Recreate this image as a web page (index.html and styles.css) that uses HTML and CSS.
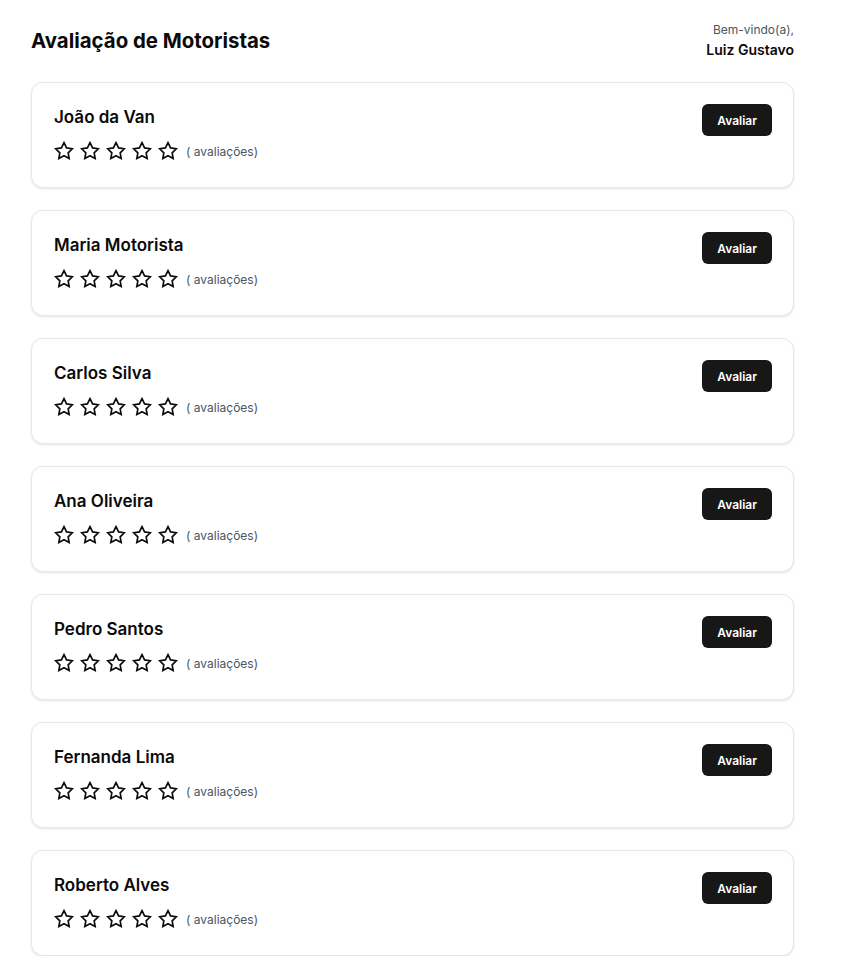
FILE: index.html
```html
<!DOCTYPE html>
<html lang="pt-BR">
<head>
<meta charset="utf-8">
<title>Avaliação de Motoristas</title>
<link rel="stylesheet" href="styles.css">
</head>
<body>
<div class="page">
  <header class="header">
    <h1 class="title">Avaliação de Motoristas</h1>
    <div class="user">
      <div class="welcome">Bem-vindo(a),</div>
      <div class="username">Luiz Gustavo</div>
    </div>
  </header>
  <main class="list">
    <div class="card">
      <div class="info">
        <div class="name">João da Van</div>
        <div class="rating">
          <span class="stars">
            <svg class="star" viewBox="0 0 24 24"><polygon points="12 2 15.09 8.26 22 9.27 17 14.14 18.18 21.02 12 17.77 5.82 21.02 7 14.14 2 9.27 8.91 8.26 12 2"/></svg>
            <svg class="star" viewBox="0 0 24 24"><polygon points="12 2 15.09 8.26 22 9.27 17 14.14 18.18 21.02 12 17.77 5.82 21.02 7 14.14 2 9.27 8.91 8.26 12 2"/></svg>
            <svg class="star" viewBox="0 0 24 24"><polygon points="12 2 15.09 8.26 22 9.27 17 14.14 18.18 21.02 12 17.77 5.82 21.02 7 14.14 2 9.27 8.91 8.26 12 2"/></svg>
            <svg class="star" viewBox="0 0 24 24"><polygon points="12 2 15.09 8.26 22 9.27 17 14.14 18.18 21.02 12 17.77 5.82 21.02 7 14.14 2 9.27 8.91 8.26 12 2"/></svg>
            <svg class="star" viewBox="0 0 24 24"><polygon points="12 2 15.09 8.26 22 9.27 17 14.14 18.18 21.02 12 17.77 5.82 21.02 7 14.14 2 9.27 8.91 8.26 12 2"/></svg>
          </span>
          <span class="count">( avaliações)</span>
        </div>
      </div>
      <button class="btn">Avaliar</button>
    </div>
    <div class="card">
      <div class="info">
        <div class="name">Maria Motorista</div>
        <div class="rating">
          <span class="stars">
            <svg class="star" viewBox="0 0 24 24"><polygon points="12 2 15.09 8.26 22 9.27 17 14.14 18.18 21.02 12 17.77 5.82 21.02 7 14.14 2 9.27 8.91 8.26 12 2"/></svg>
            <svg class="star" viewBox="0 0 24 24"><polygon points="12 2 15.09 8.26 22 9.27 17 14.14 18.18 21.02 12 17.77 5.82 21.02 7 14.14 2 9.27 8.91 8.26 12 2"/></svg>
            <svg class="star" viewBox="0 0 24 24"><polygon points="12 2 15.09 8.26 22 9.27 17 14.14 18.18 21.02 12 17.77 5.82 21.02 7 14.14 2 9.27 8.91 8.26 12 2"/></svg>
            <svg class="star" viewBox="0 0 24 24"><polygon points="12 2 15.09 8.26 22 9.27 17 14.14 18.18 21.02 12 17.77 5.82 21.02 7 14.14 2 9.27 8.91 8.26 12 2"/></svg>
            <svg class="star" viewBox="0 0 24 24"><polygon points="12 2 15.09 8.26 22 9.27 17 14.14 18.18 21.02 12 17.77 5.82 21.02 7 14.14 2 9.27 8.91 8.26 12 2"/></svg>
          </span>
          <span class="count">( avaliações)</span>
        </div>
      </div>
      <button class="btn">Avaliar</button>
    </div>
    <div class="card">
      <div class="info">
        <div class="name">Carlos Silva</div>
        <div class="rating">
          <span class="stars">
            <svg class="star" viewBox="0 0 24 24"><polygon points="12 2 15.09 8.26 22 9.27 17 14.14 18.18 21.02 12 17.77 5.82 21.02 7 14.14 2 9.27 8.91 8.26 12 2"/></svg>
            <svg class="star" viewBox="0 0 24 24"><polygon points="12 2 15.09 8.26 22 9.27 17 14.14 18.18 21.02 12 17.77 5.82 21.02 7 14.14 2 9.27 8.91 8.26 12 2"/></svg>
            <svg class="star" viewBox="0 0 24 24"><polygon points="12 2 15.09 8.26 22 9.27 17 14.14 18.18 21.02 12 17.77 5.82 21.02 7 14.14 2 9.27 8.91 8.26 12 2"/></svg>
            <svg class="star" viewBox="0 0 24 24"><polygon points="12 2 15.09 8.26 22 9.27 17 14.14 18.18 21.02 12 17.77 5.82 21.02 7 14.14 2 9.27 8.91 8.26 12 2"/></svg>
            <svg class="star" viewBox="0 0 24 24"><polygon points="12 2 15.09 8.26 22 9.27 17 14.14 18.18 21.02 12 17.77 5.82 21.02 7 14.14 2 9.27 8.91 8.26 12 2"/></svg>
          </span>
          <span class="count">( avaliações)</span>
        </div>
      </div>
      <button class="btn">Avaliar</button>
    </div>
    <div class="card">
      <div class="info">
        <div class="name">Ana Oliveira</div>
        <div class="rating">
          <span class="stars">
            <svg class="star" viewBox="0 0 24 24"><polygon points="12 2 15.09 8.26 22 9.27 17 14.14 18.18 21.02 12 17.77 5.82 21.02 7 14.14 2 9.27 8.91 8.26 12 2"/></svg>
            <svg class="star" viewBox="0 0 24 24"><polygon points="12 2 15.09 8.26 22 9.27 17 14.14 18.18 21.02 12 17.77 5.82 21.02 7 14.14 2 9.27 8.91 8.26 12 2"/></svg>
            <svg class="star" viewBox="0 0 24 24"><polygon points="12 2 15.09 8.26 22 9.27 17 14.14 18.18 21.02 12 17.77 5.82 21.02 7 14.14 2 9.27 8.91 8.26 12 2"/></svg>
            <svg class="star" viewBox="0 0 24 24"><polygon points="12 2 15.09 8.26 22 9.27 17 14.14 18.18 21.02 12 17.77 5.82 21.02 7 14.14 2 9.27 8.91 8.26 12 2"/></svg>
            <svg class="star" viewBox="0 0 24 24"><polygon points="12 2 15.09 8.26 22 9.27 17 14.14 18.18 21.02 12 17.77 5.82 21.02 7 14.14 2 9.27 8.91 8.26 12 2"/></svg>
          </span>
          <span class="count">( avaliações)</span>
        </div>
      </div>
      <button class="btn">Avaliar</button>
    </div>
    <div class="card">
      <div class="info">
        <div class="name">Pedro Santos</div>
        <div class="rating">
          <span class="stars">
            <svg class="star" viewBox="0 0 24 24"><polygon points="12 2 15.09 8.26 22 9.27 17 14.14 18.18 21.02 12 17.77 5.82 21.02 7 14.14 2 9.27 8.91 8.26 12 2"/></svg>
            <svg class="star" viewBox="0 0 24 24"><polygon points="12 2 15.09 8.26 22 9.27 17 14.14 18.18 21.02 12 17.77 5.82 21.02 7 14.14 2 9.27 8.91 8.26 12 2"/></svg>
            <svg class="star" viewBox="0 0 24 24"><polygon points="12 2 15.09 8.26 22 9.27 17 14.14 18.18 21.02 12 17.77 5.82 21.02 7 14.14 2 9.27 8.91 8.26 12 2"/></svg>
            <svg class="star" viewBox="0 0 24 24"><polygon points="12 2 15.09 8.26 22 9.27 17 14.14 18.18 21.02 12 17.77 5.82 21.02 7 14.14 2 9.27 8.91 8.26 12 2"/></svg>
            <svg class="star" viewBox="0 0 24 24"><polygon points="12 2 15.09 8.26 22 9.27 17 14.14 18.18 21.02 12 17.77 5.82 21.02 7 14.14 2 9.27 8.91 8.26 12 2"/></svg>
          </span>
          <span class="count">( avaliações)</span>
        </div>
      </div>
      <button class="btn">Avaliar</button>
    </div>
    <div class="card">
      <div class="info">
        <div class="name">Fernanda Lima</div>
        <div class="rating">
          <span class="stars">
            <svg class="star" viewBox="0 0 24 24"><polygon points="12 2 15.09 8.26 22 9.27 17 14.14 18.18 21.02 12 17.77 5.82 21.02 7 14.14 2 9.27 8.91 8.26 12 2"/></svg>
            <svg class="star" viewBox="0 0 24 24"><polygon points="12 2 15.09 8.26 22 9.27 17 14.14 18.18 21.02 12 17.77 5.82 21.02 7 14.14 2 9.27 8.91 8.26 12 2"/></svg>
            <svg class="star" viewBox="0 0 24 24"><polygon points="12 2 15.09 8.26 22 9.27 17 14.14 18.18 21.02 12 17.77 5.82 21.02 7 14.14 2 9.27 8.91 8.26 12 2"/></svg>
            <svg class="star" viewBox="0 0 24 24"><polygon points="12 2 15.09 8.26 22 9.27 17 14.14 18.18 21.02 12 17.77 5.82 21.02 7 14.14 2 9.27 8.91 8.26 12 2"/></svg>
            <svg class="star" viewBox="0 0 24 24"><polygon points="12 2 15.09 8.26 22 9.27 17 14.14 18.18 21.02 12 17.77 5.82 21.02 7 14.14 2 9.27 8.91 8.26 12 2"/></svg>
          </span>
          <span class="count">( avaliações)</span>
        </div>
      </div>
      <button class="btn">Avaliar</button>
    </div>
    <div class="card">
      <div class="info">
        <div class="name">Roberto Alves</div>
        <div class="rating">
          <span class="stars">
            <svg class="star" viewBox="0 0 24 24"><polygon points="12 2 15.09 8.26 22 9.27 17 14.14 18.18 21.02 12 17.77 5.82 21.02 7 14.14 2 9.27 8.91 8.26 12 2"/></svg>
            <svg class="star" viewBox="0 0 24 24"><polygon points="12 2 15.09 8.26 22 9.27 17 14.14 18.18 21.02 12 17.77 5.82 21.02 7 14.14 2 9.27 8.91 8.26 12 2"/></svg>
            <svg class="star" viewBox="0 0 24 24"><polygon points="12 2 15.09 8.26 22 9.27 17 14.14 18.18 21.02 12 17.77 5.82 21.02 7 14.14 2 9.27 8.91 8.26 12 2"/></svg>
            <svg class="star" viewBox="0 0 24 24"><polygon points="12 2 15.09 8.26 22 9.27 17 14.14 18.18 21.02 12 17.77 5.82 21.02 7 14.14 2 9.27 8.91 8.26 12 2"/></svg>
            <svg class="star" viewBox="0 0 24 24"><polygon points="12 2 15.09 8.26 22 9.27 17 14.14 18.18 21.02 12 17.77 5.82 21.02 7 14.14 2 9.27 8.91 8.26 12 2"/></svg>
          </span>
          <span class="count">( avaliações)</span>
        </div>
      </div>
      <button class="btn">Avaliar</button>
    </div>
  </main>
</div>
</body>
</html>
```
FILE: styles.css
```css
* {
  box-sizing: border-box;
}

html, body {
  margin: 0;
  padding: 0;
  background: #ffffff;
}

body {
  font-family: Inter, "Noto Sans", "Liberation Sans", sans-serif;
  color: #0a0a0a;
}

.page {
  width: 763px;
  margin-left: 31px;
  padding-top: 21px;
}

.header {
  display: flex;
  justify-content: space-between;
  align-items: center;
  height: 40px;
}

.title {
  margin: 0;
  font-size: 20.4px;
  line-height: 28px;
  font-weight: 700;
  color: #0a0a0a;
}

.user {
  text-align: right;
}

.welcome {
  font-size: 12px;
  line-height: 16px;
  color: #4b5563;
}

.username {
  font-size: 14px;
  line-height: 20px;
  font-weight: 600;
  margin-top: 2px;
  color: #0a0a0a;
}

.list {
  margin-top: 21px;
  display: flex;
  flex-direction: column;
  gap: 22px;
}

.card {
  display: flex;
  justify-content: space-between;
  align-items: flex-start;
  border: 1px solid #e5e7eb;
  border-radius: 12px;
  background: #ffffff;
  box-shadow: 0 1px 3px rgba(0, 0, 0, 0.08), 0 1px 2px rgba(0, 0, 0, 0.04);
  padding: 21px 21px 22px 22px;
  height: 106px;
}

.name {
  font-size: 17px;
  line-height: 26px;
  font-weight: 600;
  color: #0a0a0a;
}

.rating {
  display: flex;
  align-items: center;
  margin-top: 9px;
  height: 24px;
}

.stars {
  display: flex;
  gap: 6px;
}

.star {
  width: 20px;
  height: 20px;
  fill: none;
  stroke: #0a0a0a;
  stroke-width: 2;
  stroke-linejoin: miter;
}

.count {
  margin-left: 8px;
  font-size: 12px;
  color: #4b5563;
}

.btn {
  height: 32px;
  padding: 0 15px;
  border: none;
  border-radius: 6px;
  background: #171717;
  color: #ffffff;
  font-family: Inter, "Noto Sans", "Liberation Sans", sans-serif;
  font-size: 12px;
  font-weight: 600;
  cursor: pointer;
}
```
